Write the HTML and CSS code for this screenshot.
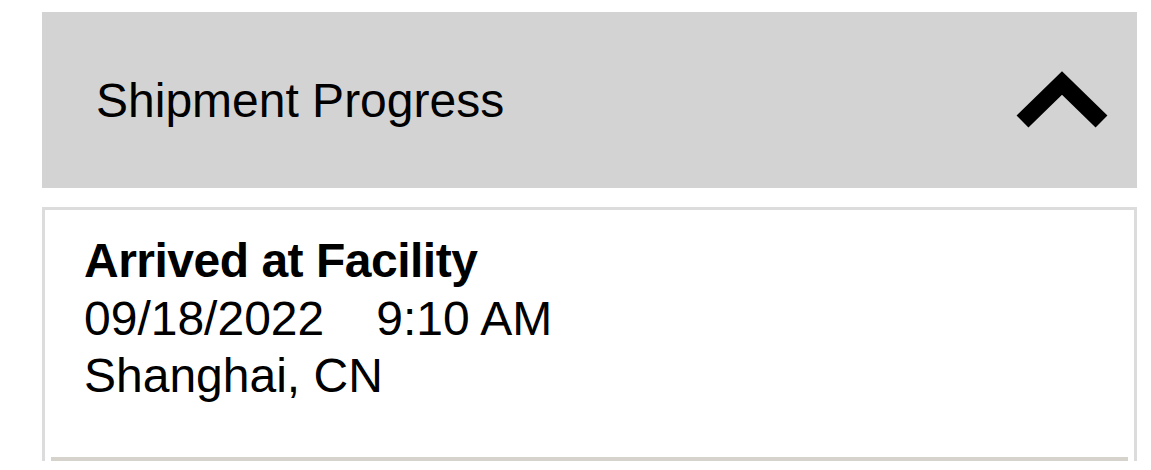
FILE: index.html
```html
<!DOCTYPE html>
<html lang="en">
<head>
  <meta charset="UTF-8">
  <meta name="viewport" content="width=device-width, initial-scale=1.0">
  <title>Shipment Progress</title>
  <link rel="stylesheet" href="styles.css">
</head>
<body>
  <div class="tracking">
    <div class="section-header">
      <span class="section-title">Shipment Progress</span>
      <svg class="chevron" width="100" height="70" viewBox="0 0 100 70">
        <path d="M10.5 56.5 L50 18 L89.5 56.5" fill="none" stroke="#000" stroke-width="17" stroke-linejoin="miter"/>
      </svg>
    </div>

    <div class="events">
      <div class="event">
        <div class="event-status">Arrived at Facility</div>
        <div class="event-time"><span>09/18/2022</span><span class="time">9:10 AM</span></div>
        <div class="event-place">Shanghai, CN</div>
      </div>
    </div>
  </div>
</body>
</html>
```

FILE: styles.css
```css
body {
  font-family: "Liberation Sans", Arial, sans-serif;
  margin: 0;
  padding: 0;
  background-color: #fff;
  color: #000;
}
.tracking {
  margin: 12px 14px 0 42px;
}
.section-header {
  display: flex;
  align-items: center;
  justify-content: space-between;
  height: 176px;
  padding: 0 25px 0 54px;
  background-color: #d3d3d3;
}
.section-title {
  font-size: 48px;
}
.chevron {
  display: block;
}
.events {
  margin-top: 19px;
  border: 3px solid #dcdcdc;
  border-bottom: none;
  padding: 0 6px;
}
.event {
  padding: 22px 33px 52px;
  border-bottom: 4px solid #d6d3cc;
  font-size: 48px;
  line-height: 57.6px;
}
.event-status {
  font-weight: bold;
  letter-spacing: -0.5px;
}
.time {
  margin-left: 52px;
}
```
